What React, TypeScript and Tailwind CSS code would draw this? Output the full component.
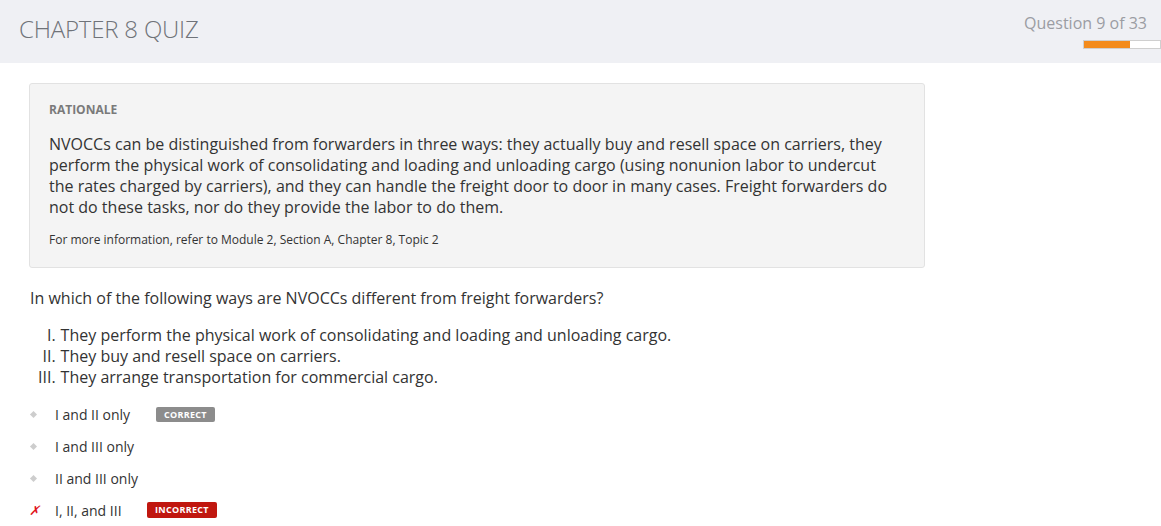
import React from "react";

const font = { fontFamily: '"Open Sans", "Noto Sans", sans-serif' };

function Bullet() {
  return <span className="inline-block w-[5px] h-[5px] bg-[#cdcdcd] rotate-45" />;
}

export default function App() {
  const options = [
    { text: "I and II only", badge: "CORRECT", mark: "bullet" },
    { text: "I and III only", mark: "bullet" },
    { text: "II and III only", mark: "bullet" },
    { text: "I, II, and III", badge: "INCORRECT", mark: "x" },
  ];
  return (
    <div style={font} className="w-[1161px] h-[526px] bg-white text-[#333] overflow-hidden">
      <div className="h-[63px] bg-[#eff0f4] flex justify-between">
        <div className="pl-[19px] pt-[11px] text-[24px] font-light text-[#6f7379] tracking-[-0.2px]">CHAPTER 8 QUIZ</div>
        <div className="flex flex-col items-end pt-[12px]">
          <div className="text-[16px] text-[#9b9da3] pr-[14px] leading-[22px]">Question 9 of 33</div>
          <div className="mt-[6px] w-[78px] h-[9px] border border-[#cfcfcf] bg-white flex">
            <div className="w-[46px] h-full bg-[#f38b1c]" />
          </div>
        </div>
      </div>
      <div className="pl-[29px] pt-[20px]">
        <div className="w-[896px] h-[185px] bg-[#f4f4f4] border border-[#e2e2e2] rounded-[3px] pl-[19px] pt-[18px]">
          <div className="text-[12px] font-bold text-[#7a7a7a] leading-[16px]">RATIONALE</div>
          <p className="mt-[16px] text-[16px] leading-[21px] text-[#333] w-[850px]">
            NVOCCs can be distinguished from forwarders in three ways: they actually buy and resell space on carriers, they perform the physical work of consolidating and loading and unloading cargo (using nonunion labor to undercut the rates charged by carriers), and they can handle the freight door to door in many cases. Freight forwarders do not do these tasks, nor do they provide the labor to do them.
          </p>
          <div className="mt-[14px] text-[12px] leading-[16px] text-[#333]">For more information, refer to Module 2, Section A, Chapter 8, Topic 2</div>
        </div>
        <div className="mt-[20px] text-[16px] leading-[21px] text-[#333] pl-[1px]">In which of the following ways are NVOCCs different from freight forwarders?</div>
        <div className="mt-[16px] text-[16px] leading-[21px] text-[#333] grid grid-cols-[auto_1fr] w-fit gap-x-[5px]">
          <span className="text-right">I.</span><span>They perform the physical work of consolidating and loading and unloading cargo.</span>
          <span className="text-right">II.</span><span>They buy and resell space on carriers.</span>
          <span className="text-right pl-[9px]">III.</span><span>They arrange transportation for commercial cargo.</span>
        </div>
        <div className="mt-[10px] flex flex-col">
          {options.map((o, i) => (
            <div key={i} className="h-[32px] flex items-center text-[14px] text-[#333]">
              <span className="w-[26px] flex justify-start pl-[2px] items-center">
                {o.mark === "bullet" ? <Bullet /> : <span className="text-[#e0131a] text-[13px] italic leading-none -ml-[2px]">✗</span>}
              </span>
              <span className={o.badge === "CORRECT" ? "w-[101px]" : o.badge ? "w-[92px]" : ""}>{o.text}</span>
              {o.badge && (
                <span
                  className={
                    "text-[9px] font-bold tracking-[0.3px] text-white rounded-[2px] px-[8px] " +
                    (o.badge === "CORRECT" ? "bg-[#8c8c8c] leading-[15px]" : "bg-[#c0170f] leading-[16px]")
                  }
                >
                  {o.badge}
                </span>
              )}
            </div>
          ))}
        </div>
      </div>
    </div>
  );
}
